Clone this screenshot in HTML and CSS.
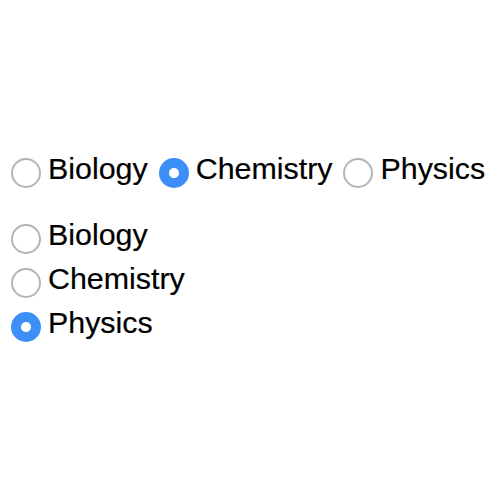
FILE: index.html
```html
<!DOCTYPE html>
<html>
<head>
<meta charset="utf-8">
<link rel="stylesheet" href="styles.css">
</head>
<body>
<div class="page">
  <div class="group inline">
    <label class="option"><input type="radio" name="a" class="radio"><span class="text">Biology</span></label>
    <label class="option"><input type="radio" name="a" class="radio" checked><span class="text">Chemistry</span></label>
    <label class="option"><input type="radio" name="a" class="radio"><span class="text">Physics</span></label>
  </div>
  <div class="group stacked">
    <label class="option"><input type="radio" name="b" class="radio"><span class="text">Biology</span></label>
    <label class="option"><input type="radio" name="b" class="radio"><span class="text">Chemistry</span></label>
    <label class="option"><input type="radio" name="b" class="radio" checked><span class="text">Physics</span></label>
  </div>
</div>
</body>
</html>
```
FILE: styles.css
```css
html, body {
  margin: 0;
  padding: 0;
  background: #ffffff;
}
.page {
  padding: 146px 0 0 11px;
  font-family: "Liberation Sans", Arial, Helvetica, sans-serif;
  font-size: 30.4px;
  line-height: 44px;
  color: #000000;
  -webkit-text-stroke: 0.2px #000000;
}
.group {
  display: flex;
}
.inline {
  flex-direction: row;
  gap: 11px;
}
.stacked {
  flex-direction: column;
  align-items: flex-start;
  margin-top: 22px;
}
.option {
  display: flex;
  align-items: flex-start;
}
.radio {
  -webkit-appearance: none;
  appearance: none;
  box-sizing: border-box;
  width: 30px;
  height: 30px;
  margin: 12px 7px 0 0;
  border-radius: 50%;
  border: 2px solid #b4b4b4;
  background: #ffffff;
}
.radio:checked {
  border: none;
  background: radial-gradient(circle, #ffffff 0, #ffffff 4.5px, #3b8ff6 5.5px);
}
.text {
  display: block;
}
```
